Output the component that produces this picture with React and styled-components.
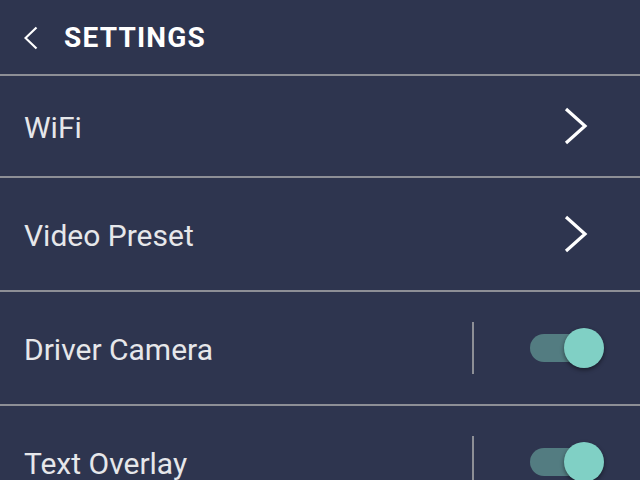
import React, { useState } from "react"
import styled, { createGlobalStyle } from "styled-components"

/**
 * @brief Global page reset
 **/
const GlobalStyle = createGlobalStyle`
  html, body {
    margin: 0;
    padding: 0;
    background: #2e354f;
  }
  body {
    font-family: Roboto, "Liberation Sans", sans-serif;
  }
`

const Screen = styled.div`
  width: 640px;
  height: 480px;
  overflow: hidden;
  background: #2e354f;
  color: #e8e8ea;
`

const Header = styled.header`
  height: 74px;
  display: flex;
  align-items: center;
  padding-left: 24px;
  border-bottom: 2px solid #8d8f96;
  box-sizing: content-box;
`

const BackButton = styled.button`
  display: flex;
  align-items: center;
  background: none;
  border: 0;
  padding: 0;
  margin: 2px 26px 0 0;
  color: #ffffff;
`

const Title = styled.h1`
  margin: 2px 0 0;
  font-size: 28px;
  font-weight: 700;
  letter-spacing: 1.2px;
  color: #ffffff;
  line-height: 1;
`

const Row = styled.div`
  height: ${props => props.height ? props.height : "112px"};
  display: flex;
  align-items: center;
  padding: 0 ${props => props.padRight ? props.padRight : "36px"} 0 24px;
  border-bottom: 2px solid #8d8f96;
`

const Label = styled.span`
  flex: 1;
  padding-top: 3px;
  font-size: 30px;
  font-weight: 400;
  color: #e6e7ea;
`

const Separator = styled.span`
  width: 2px;
  height: 52px;
  background: #8d8f96;
  margin-right: 56px;
`

const Switch = styled.button`
  position: relative;
  width: 74px;
  height: 40px;
  background: none;
  border: 0;
  padding: 0;
  cursor: pointer;
`

const Track = styled.span`
  position: absolute;
  left: 0;
  top: 6px;
  width: 64px;
  height: 28px;
  border-radius: 14px;
  background: ${props => props.on ? "#537c81" : "#5a6072"};
`

const Thumb = styled.span`
  position: absolute;
  top: 0;
  left: ${props => props.on ? "34px" : "0"};
  width: 40px;
  height: 40px;
  border-radius: 50%;
  background: ${props => props.on ? "#80d0c5" : "#c9ccd4"};
  box-shadow: 0 2px 4px rgba(0, 0, 0, 0.45);
`

const ChevronLeft = () => (
  <svg width="14" height="24" viewBox="0 0 14 24">
    <polyline points="12.5,1.5 1.5,12 12.5,22.5" fill="none" stroke="currentColor" strokeWidth="2.2" />
  </svg>
)

const ChevronRight = () => (
  <svg width="26" height="40" viewBox="0 0 26 40">
    <polyline points="3,3 22,20 3,37" fill="none" stroke="#ffffff" strokeWidth="3.2" />
  </svg>
)

const Toggle = ({ on, onClick }) => (
  <Switch onClick={onClick} aria-pressed={on}>
    <Track on={on ? 1 : 0} />
    <Thumb on={on ? 1 : 0} />
  </Switch>
)

export default function App() {
  const [driver, setDriver] = useState(true)
  const [overlay, setOverlay] = useState(true)

  return (
    <Screen>
      <GlobalStyle />
      <Header>
        <BackButton><ChevronLeft /></BackButton>
        <Title>SETTINGS</Title>
      </Header>
      <Row height="100px" padRight="51px">
        <Label>WiFi</Label>
        <ChevronRight />
      </Row>
      <Row padRight="51px">
        <Label>Video Preset</Label>
        <ChevronRight />
      </Row>
      <Row>
        <Label>Driver Camera</Label>
        <Separator />
        <Toggle on={driver} onClick={() => setDriver(!driver)} />
      </Row>
      <Row>
        <Label>Text Overlay</Label>
        <Separator />
        <Toggle on={overlay} onClick={() => setOverlay(!overlay)} />
      </Row>
    </Screen>
  )
}
